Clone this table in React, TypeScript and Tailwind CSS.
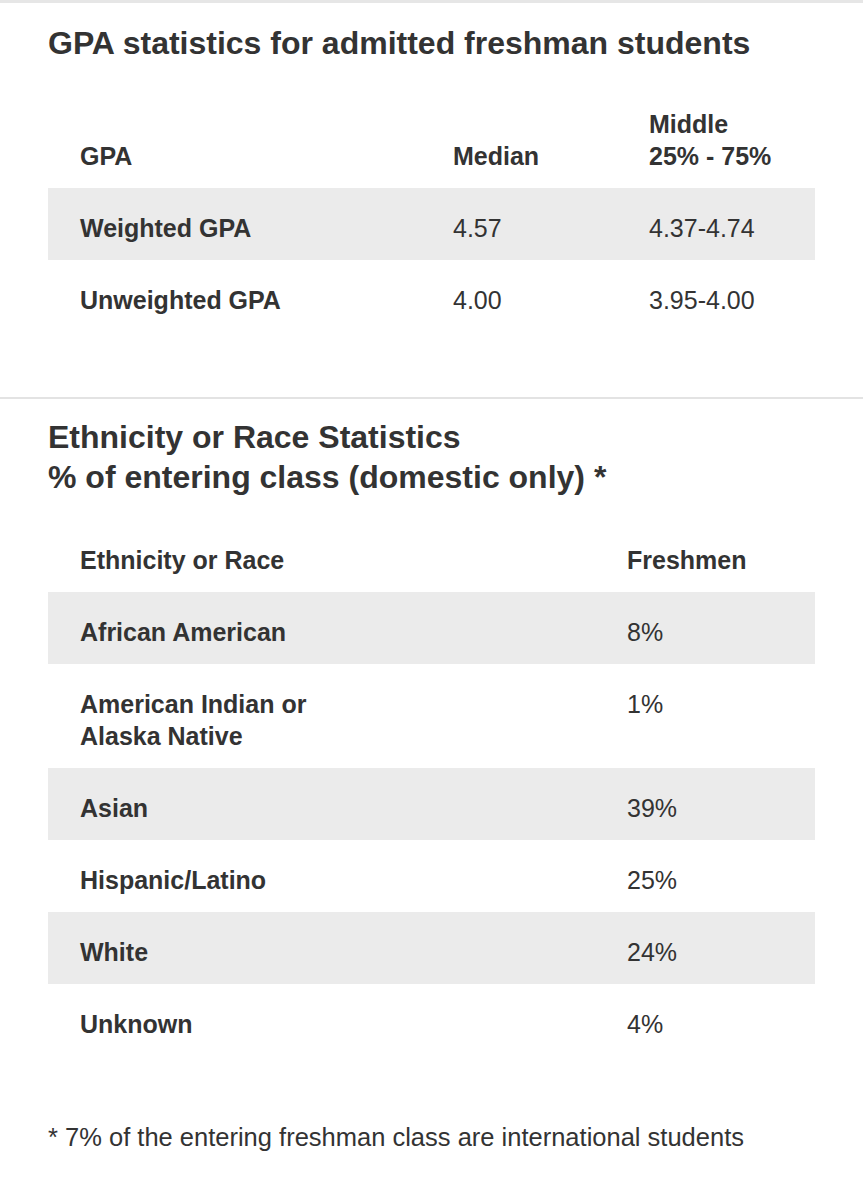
const gpaRows = [
  { label: 'Weighted GPA', median: '4.57', middle: '4.37-4.74' },
  { label: 'Unweighted GPA', median: '4.00', middle: '3.95-4.00' },
];

const raceRows: { label: React.ReactNode; value: string }[] = [
  { label: 'African American', value: '8%' },
  {
    label: (
      <>
        American Indian or
        <br />
        Alaska Native
      </>
    ),
    value: '1%',
  },
  { label: 'Asian', value: '39%' },
  { label: 'Hispanic/Latino', value: '25%' },
  { label: 'White', value: '24%' },
  { label: 'Unknown', value: '4%' },
];

function SectionTitle({ children }: { children: React.ReactNode }) {
  return <h2 className="text-[32px] leading-[40px] font-bold">{children}</h2>;
}

export default function App() {
  return (
    <div className="min-h-[1200px] bg-white border-t-[3px] border-[#e6e6e6] text-[#333] font-['Liberation_Sans',Arial,sans-serif]">
      <section className="px-12 pt-[20px]">
        <SectionTitle>GPA statistics for admitted freshman students</SectionTitle>
        <table className="mt-[45px] w-full border-collapse text-[25px]">
          <colgroup>
            <col className="w-[373px]" />
            <col className="w-[196px]" />
            <col />
          </colgroup>
          <thead>
            <tr className="leading-[32px] text-left align-bottom">
              <th className="pl-8 pb-4 font-bold">GPA</th>
              <th className="pl-8 pb-4 font-bold">Median</th>
              <th className="pl-8 pb-4 font-bold">
                Middle
                <br />
                25% - 75%
              </th>
            </tr>
          </thead>
          <tbody>
            {gpaRows.map((row, i) => (
              <tr key={row.label} className={`leading-[32px] align-top ${i % 2 === 0 ? 'bg-[#ebebeb]' : ''}`}>
                <td className="pl-8 pt-[24px] pb-[16px] font-bold">{row.label}</td>
                <td className="pl-8 pt-[24px] pb-[16px]">{row.median}</td>
                <td className="pl-8 pt-[24px] pb-[16px]">{row.middle}</td>
              </tr>
            ))}
          </tbody>
        </table>
      </section>

      <div className="mt-[65px] h-[2px] bg-[#e3e3e3]" />

      <section className="px-12 pt-[18px]">
        <SectionTitle>
          Ethnicity or Race Statistics
          <br />
          % of entering class (domestic only) *
        </SectionTitle>
        <table className="mt-[47px] w-full border-collapse text-[25px]">
          <colgroup>
            <col className="w-[547px]" />
            <col />
          </colgroup>
          <thead>
            <tr className="leading-[32px] text-left align-bottom">
              <th className="pl-8 pb-4 font-bold">Ethnicity or Race</th>
              <th className="pl-8 pb-4 font-bold">Freshmen</th>
            </tr>
          </thead>
          <tbody>
            {raceRows.map((row, i) => (
              <tr key={row.value + i} className={`leading-[32px] align-top ${i % 2 === 0 ? 'bg-[#ebebeb]' : ''}`}>
                <td className="pl-8 pt-[24px] pb-[16px] font-bold">{row.label}</td>
                <td className="pl-8 pt-[24px] pb-[16px]">{row.value}</td>
              </tr>
            ))}
          </tbody>
        </table>

        <p className="mt-[65px] text-[25.5px] leading-[32px]">
          * 7% of the entering freshman class are international students
        </p>
      </section>
    </div>
  );
}
